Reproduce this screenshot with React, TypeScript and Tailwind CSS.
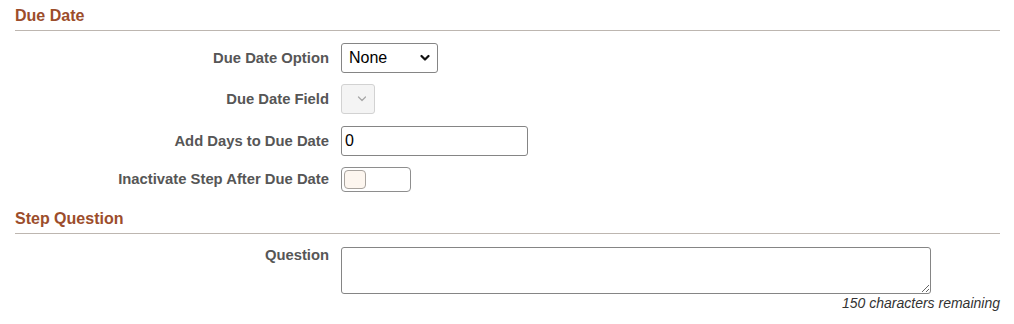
const labelCls =
  "w-[329px] shrink-0 text-right text-[14.8px] leading-[18px] font-bold text-[#565656]";

const Chevron = ({ disabled }: { disabled?: boolean }) => (
  <svg
    width="10"
    height="7"
    viewBox="0 0 10 7"
    className="pointer-events-none absolute top-1/2 -translate-y-1/2 right-[8px]"
  >
    <path
      d="M1.5 1.5 L5 5 L8.5 1.5"
      fill="none"
      stroke={disabled ? "#a8a8a8" : "#111"}
      strokeWidth={disabled ? 1.3 : 2.2}
      strokeLinecap="round"
      strokeLinejoin="round"
    />
  </svg>
);

const SectionHeader = ({ title, className }: { title: string; className?: string }) => (
  <div
    className={`ml-[15px] mr-[14px] pb-[4px] border-b border-[#bdb6b0] text-[16px] leading-[20px] font-bold text-[#9c4d2b] ${className ?? ""}`}
  >
    {title}
  </div>
);

const App = () => {
  return (
    <div className="w-[1014px] h-[324px] bg-white overflow-hidden font-['Liberation_Sans',Arial,sans-serif]">
      <SectionHeader title="Due Date" className="mt-[6px]" />

      <div className="flex flex-col mt-[12px]">
        {/* Due Date Option */}
        <div className="flex items-center h-[30px]">
          <label className={labelCls}>Due Date Option</label>
          <div className="relative ml-[12px]">
            <select
              defaultValue="None"
              className="appearance-none w-[97px] h-[30px] pl-[7px] border border-[#858585] rounded-[3px] bg-white text-[16px] text-black outline-none"
            >
              <option>None</option>
            </select>
            <Chevron />
          </div>
        </div>

        {/* Due Date Field */}
        <div className="flex items-center h-[30px] mt-[11px]">
          <label className={labelCls}>Due Date Field</label>
          <div className="relative ml-[12px]">
            <select
              disabled
              className="appearance-none w-[34px] h-[30px] border border-[#d2d2d2] rounded-[3px] bg-[#f4f4f4] outline-none"
            />
            <Chevron disabled />
          </div>
        </div>

        {/* Add Days to Due Date */}
        <div className="flex items-center h-[30px] mt-[12px]">
          <label className={labelCls}>Add Days to Due Date</label>
          <input
            defaultValue="0"
            className="ml-[12px] w-[187px] h-[30px] px-[3px] border border-[#858585] rounded-[3px] text-[16px] text-black outline-none"
          />
        </div>

        {/* Inactivate Step After Due Date */}
        <div className="flex items-center h-[24px] mt-[11px]">
          <label className={labelCls}>Inactivate Step After Due Date</label>
          <div className="ml-[12px] w-[70px] h-[25px] p-[2px] border border-[#8e8e8e] rounded-[4px] bg-white">
            <div className="w-[22px] h-full rounded-[4px] border border-[#a8a39e] bg-[#fdf6ef]" />
          </div>
        </div>
      </div>

      <SectionHeader title="Step Question" className="mt-[18px] border-[#b8b8b8]" />

      <div className="flex items-start mt-[13px]">
        <label className={`${labelCls} -mt-[1px]`}>Question</label>
        <div className="ml-[12px] flex flex-col">
          <textarea className="w-[590px] h-[47px] border border-[#858585] rounded-[3px] outline-none resize" />
        </div>
      </div>
      <div className="mr-[14px] mt-[1px] text-right text-[14px] leading-[16px] italic text-[#333]">
        150 characters remaining
      </div>
    </div>
  );
};

export default App;
